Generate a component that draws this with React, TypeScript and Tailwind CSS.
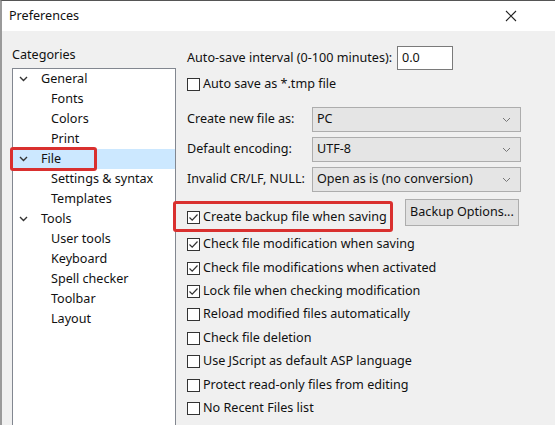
import React from "react";

const font = { fontFamily: '"Noto Sans", "Noto Sans CJK SC", sans-serif' };

function Chevron() {
  return (
    <svg width="9" height="6" viewBox="0 0 9 6" className="shrink-0">
      <path d="M1 1 L4.5 4.5 L8 1" fill="none" stroke="#333" strokeWidth="1.4" />
    </svg>
  );
}

function SelChevron() {
  return (
    <svg width="9" height="6" viewBox="0 0 9 6" className="shrink-0">
      <path d="M1 1 L4.5 4.5 L8 1" fill="none" stroke="#777" strokeWidth="1" />
    </svg>
  );
}

function Box({ checked }: { checked?: boolean }) {
  return (
    <div className="w-[13px] h-[13px] border border-[#333] bg-white shrink-0 flex items-center justify-center">
      {checked && (
        <svg width="11" height="11" viewBox="0 0 11 11">
          <path d="M1.5 5.5 L4.2 8.2 L9.5 2.5" fill="none" stroke="#333" strokeWidth="1.2" />
        </svg>
      )}
    </div>
  );
}

function Check({ label, checked }: { label: string; checked?: boolean }) {
  return (
    <div className="h-[23.4px] flex items-center gap-[3px] text-[12.6px] text-[#111] whitespace-nowrap">
      <Box checked={checked} />
      <span>{label}</span>
    </div>
  );
}

function Select({ label, value }: { label: string; value: string }) {
  return (
    <div className="h-[25px] flex items-center mb-[5px]">
      <span className="w-[125px] text-[12.6px] text-[#111] whitespace-nowrap">{label}</span>
      <div className="w-[209px] h-[25px] bg-[#e5e5e5] border border-[#adadad] flex items-center justify-between pl-[4px] pr-[9px] text-[12.6px] text-[#111]">
        <span>{value}</span>
        <SelChevron />
      </div>
    </div>
  );
}

const tree: { label: string; level: number; sel?: boolean }[] = [
  { label: "General", level: 0 },
  { label: "Fonts", level: 1 },
  { label: "Colors", level: 1 },
  { label: "Print", level: 1 },
  { label: "File", level: 0, sel: true },
  { label: "Settings & syntax", level: 1 },
  { label: "Templates", level: 1 },
  { label: "Tools", level: 0 },
  { label: "User tools", level: 1 },
  { label: "Keyboard", level: 1 },
  { label: "Spell checker", level: 1 },
  { label: "Toolbar", level: 1 },
  { label: "Layout", level: 1 },
];

export default function App() {
  return (
    <div
      className="w-[555px] h-[425px] overflow-hidden bg-[#f0f0f0] border-l-2 border-t border-l-[#9a9a9a] border-t-[#555] relative"
      style={font}
    >
      <div className="h-[30px] bg-white flex items-center justify-between pl-[7px] pr-[38px]">
        <span className="text-[12.6px] text-[#111]">Preferences</span>
        <svg width="12" height="12" viewBox="0 0 12 12">
          <path d="M1 1 L11 11 M11 1 L1 11" stroke="#222" strokeWidth="1.1" />
        </svg>
      </div>
      <div className="flex">
        <div className="pl-[10px] w-[174px] shrink-0">
          <div className="h-[37px] pt-[14px] text-[12.6px] text-[#111] leading-[20px]">Categories</div>
          <div className="w-[164px] h-[400px] bg-white border border-[#828790] relative">
            {tree.map((t) => (
              <div
                key={t.label}
                className={`h-[20px] flex items-center text-[12.6px] text-[#111] ${t.sel ? "bg-[#cce8ff]" : ""} ${t.level === 0 ? "pl-[6px]" : "pl-[38px]"}`}
              >
                {t.level === 0 && (
                  <span className="mr-[13px] flex items-center">
                    <Chevron />
                  </span>
                )}
                <span>{t.label}</span>
              </div>
            ))}
            <div className="absolute left-[-3px] top-[78px] w-[87px] h-[24px] border-[3px] border-[#d9302f] rounded-[3px]" />
          </div>
        </div>
        <div className="pl-[11px] flex-1">
          <div className="mt-[15px] h-[24px] flex items-center text-[12.6px] text-[#111]">
            <span className="w-[210px] whitespace-nowrap">Auto-save interval (0-100 minutes):</span>
            <div className="w-[56px] h-[24px] bg-white border border-[#7a7a7a] flex items-center pl-[4px]">0.0</div>
          </div>
          <div className="mt-[3px] h-[22px] flex items-center gap-[3px] text-[12.6px] text-[#111]">
            <Box />
            <span>Auto save as *.tmp file</span>
          </div>
          <div className="mt-[12px]">
            <Select label="Create new file as:" value="PC" />
            <Select label="Default encoding:" value="UTF-8" />
            <Select label="Invalid CR/LF, NULL:" value="Open as is (no conversion)" />
          </div>
          <div className="mt-[7px] h-[27px] flex items-center relative">
            <div className="flex items-center gap-[3px] text-[12.6px] text-[#111] w-[218px] mt-[9px] whitespace-nowrap">
              <Box checked />
              <span>Create backup file when saving</span>
            </div>
            <div className="w-[114px] h-[27px] bg-[#e1e1e1] border border-[#adadad] flex items-center justify-center text-[12.6px] text-[#111]">
              Backup Options...
            </div>
            <div className="absolute left-[-14px] top-[2px] w-[220px] h-[31px] border-[3px] border-[#d9302f] rounded-[3px]" />
          </div>
          <div className="mt-[7px]">
            <Check label="Check file modification when saving" checked />
            <Check label="Check file modifications when activated" checked />
            <Check label="Lock file when checking modification" checked />
            <Check label="Reload modified files automatically" />
            <Check label="Check file deletion" />
            <Check label="Use JScript as default ASP language" />
            <Check label="Protect read-only files from editing" />
            <Check label="No Recent Files list" />
            <Check label="" />
          </div>
        </div>
      </div>
    </div>
  );
}
